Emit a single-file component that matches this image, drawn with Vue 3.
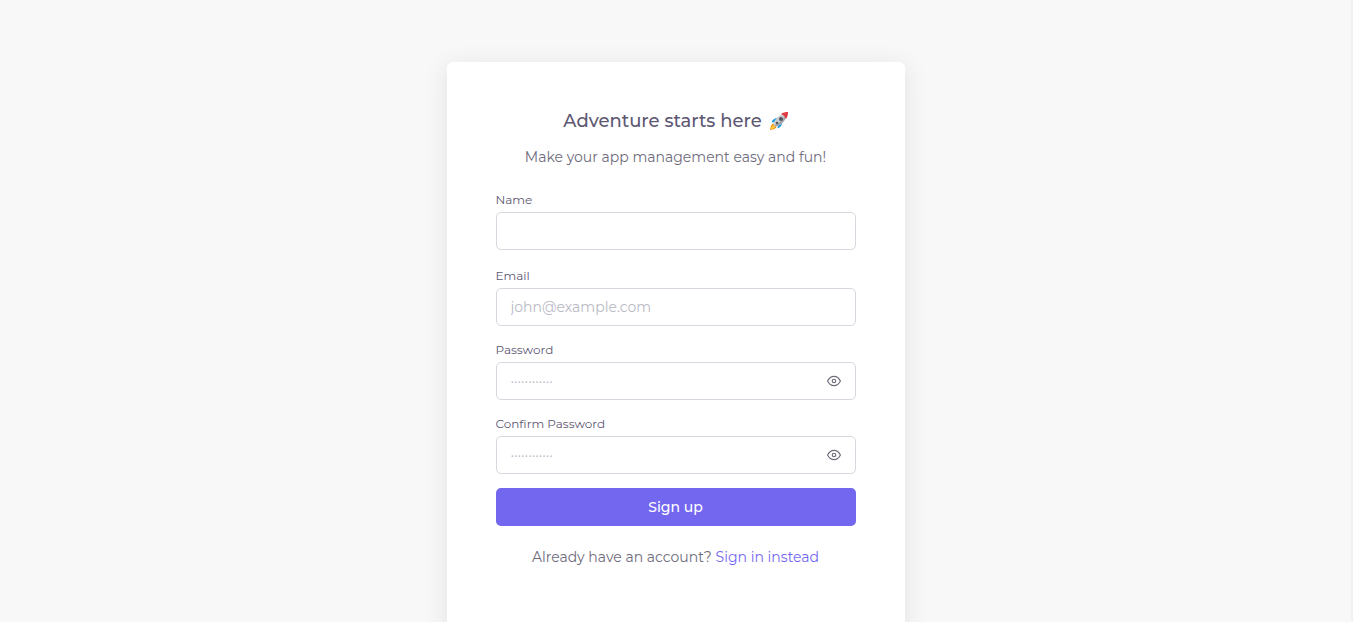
<script setup>
import { reactive } from 'vue'

const fields = reactive([
  { id: 'name', label: 'Name', type: 'text', placeholder: '', value: '', secret: false, shown: false },
  { id: 'email', label: 'Email', type: 'email', placeholder: 'john@example.com', value: '', secret: false, shown: false },
  { id: 'password', label: 'Password', type: 'password', placeholder: '············', value: '', secret: true, shown: false },
  { id: 'confirm', label: 'Confirm Password', type: 'password', placeholder: '············', value: '', secret: true, shown: false },
])
</script>

<template>
  <main class="page">
    <section class="card">
      <h1 class="title">
        <span>Adventure starts here</span>
        <svg class="rocket" viewBox="0 0 36 36" width="18" height="18" role="img" aria-label="rocket">
          <path fill="#1e9ae0" d="M15 12C9 12 5 15 3 21l8-1z" />
          <path fill="#1e9ae0" d="M24 21c0 6-3 10-9 12l1-8z" />
          <path fill="#f4900c" d="M6 23c-3 1-5 6-6 13 7-1 12-3 13-6l-2-5z" />
          <path fill="#ffcc4d" d="M7 26c-3 2-5 6-6 9 4-1 8-3 9-6z" />
          <path fill="#c9cdd1" d="M8 21C12 12 19 4 35 1c-3 16-11 23-20 27l-4 1-4-4z" />
          <path fill="#a0a5aa" d="M35 1c-3 16-11 23-20 27l-4 1-2-2C19 22 28 12 35 1z" />
          <path fill="#e03a40" d="M22 4c4-3 9-4 14-4 0 5-1 10-4 14-2-5-5-8-10-10z" />
          <circle cx="22" cy="14" r="4" fill="#50575f" />
          <circle cx="14" cy="22" r="2.5" fill="#50575f" />
        </svg>
      </h1>
      <p class="subtitle">Make your app management easy and fun!</p>
      <form class="form" @submit.prevent>
        <div v-for="field in fields" :key="field.id" class="field" :class="field.id">
          <label class="label" :for="field.id">{{ field.label }}</label>
          <div class="control">
            <input
              :id="field.id"
              v-model="field.value"
              class="input"
              :type="field.shown ? 'text' : field.type"
              :placeholder="field.placeholder"
            />
            <button
              v-if="field.secret"
              class="toggle"
              type="button"
              :aria-label="'Show ' + field.label"
              @click="field.shown = !field.shown"
            >
              <svg viewBox="0 0 24 24" width="14" height="14" aria-hidden="true">
                <path d="M1 12s4-8 11-8 11 8 11 8-4 8-11 8-11-8-11-8z" />
                <circle cx="12" cy="12" r="3" />
              </svg>
            </button>
          </div>
        </div>
        <button class="submit" type="submit">Sign up</button>
      </form>
      <p class="footer">
        <span>Already have an account?</span>
        <a class="link" href="#">Sign in instead</a>
      </p>
    </section>
  </main>
</template>

<style>
html,
body {
  margin: 0;
  background: #f8f8f8;
}
</style>

<style scoped>
.page {
  box-sizing: border-box;
  min-height: 100vh;
  display: flex;
  justify-content: center;
  align-items: flex-start;
  padding: 62px 16px 0;
  border-right: 2px solid #f1f1f1;
  font-family: Montserrat, Inter, "Noto Sans", sans-serif;
  font-size: 14px;
  line-height: 20px;
  color: #6e6b7b;
}

.card {
  box-sizing: border-box;
  width: 100%;
  max-width: 458px;
  padding: 48px 49px 72px;
  border-radius: 6px;
  background: #fff;
  box-shadow: 0 4px 24px rgba(34, 41, 47, 0.1);
}

.title {
  display: flex;
  justify-content: center;
  align-items: center;
  gap: 8px;
  margin: 0;
  font-size: 18px;
  font-weight: 500;
  line-height: 22px;
  color: #5e5873;
}

.subtitle {
  margin: 15px 0 25px;
  text-align: center;
}

.form {
  display: flex;
  flex-direction: column;
}

.field {
  display: flex;
  flex-direction: column;
  gap: 4px;
  margin-bottom: 16px;
}

.field.name {
  margin-bottom: 18px;
}

.field.confirm {
  margin-bottom: 14px;
}

.label {
  font-size: 12px;
  line-height: 16px;
  color: #5e5873;
}

.control {
  display: flex;
  align-items: center;
  box-sizing: border-box;
  height: 38px;
  padding: 0 14px;
  border: 1px solid #d8d6de;
  border-radius: 5px;
  background: #fff;
}

.control:focus-within {
  border-color: #7367f0;
}

.input {
  flex: 1;
  min-width: 0;
  height: 36px;
  padding: 0;
  border: 0;
  outline: 0;
  background: transparent;
  font-family: inherit;
  font-size: 14px;
  color: #6e6b7b;
}

.input::placeholder {
  color: #b9b9c3;
  opacity: 1;
}

.toggle {
  display: flex;
  padding: 0;
  border: 0;
  background: none;
  color: #6e6b7b;
  cursor: pointer;
}

.toggle svg {
  fill: none;
  stroke: currentColor;
  stroke-width: 2;
  stroke-linecap: round;
  stroke-linejoin: round;
}

.submit {
  height: 38px;
  border: 0;
  border-radius: 5px;
  background: #7367f0;
  font-family: inherit;
  font-size: 14px;
  font-weight: 500;
  color: #fff;
  cursor: pointer;
}

.footer {
  display: flex;
  flex-wrap: wrap;
  justify-content: center;
  gap: 4px;
  margin: 21px 0 0;
}

.link {
  color: #7367f0;
  text-decoration: none;
}
</style>
